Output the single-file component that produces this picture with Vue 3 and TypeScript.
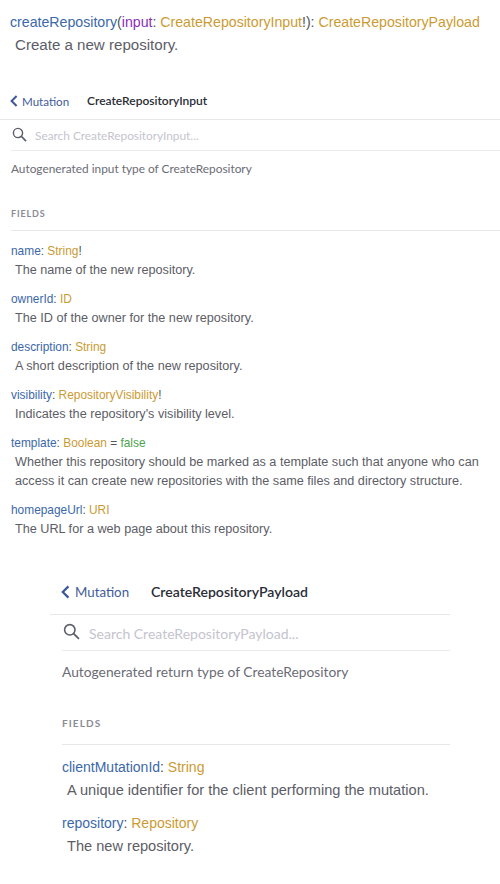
<script setup lang="ts">
interface Field {
  name: string
  type: string
  bang?: boolean
  def?: string
  desc: string
}
interface Panel {
  title: string
  search: string
  about: string
  big: boolean
  fields: Field[]
}
const panels: Panel[] = [
  {
    title: 'CreateRepositoryInput',
    search: 'Search CreateRepositoryInput...',
    about: 'Autogenerated input type of CreateRepository',
    big: false,
    fields: [
      { name: 'name', type: 'String', bang: true, desc: 'The name of the new repository.' },
      { name: 'ownerId', type: 'ID', desc: 'The ID of the owner for the new repository.' },
      { name: 'description', type: 'String', desc: 'A short description of the new repository.' },
      { name: 'visibility', type: 'RepositoryVisibility', bang: true, desc: "Indicates the repository's visibility level." },
      { name: 'template', type: 'Boolean', def: 'false', desc: 'Whether this repository should be marked as a template such that anyone who can access it can create new repositories with the same files and directory structure.' },
      { name: 'homepageUrl', type: 'URI', desc: 'The URL for a web page about this repository.' },
    ],
  },
  {
    title: 'CreateRepositoryPayload',
    search: 'Search CreateRepositoryPayload...',
    about: 'Autogenerated return type of CreateRepository',
    big: true,
    fields: [
      { name: 'clientMutationId', type: 'String', desc: 'A unique identifier for the client performing the mutation.' },
      { name: 'repository', type: 'Repository', desc: 'The new repository.' },
    ],
  },
]
</script>

<template>
  <main class="page">
    <section class="intro">
      <div class="sig"><span class="blue">createRepository</span>(<span class="purple">input</span>: <span class="gold">CreateRepositoryInput</span>!): <span class="gold">CreateRepositoryPayload</span></div>
      <p class="sig-desc">Create a new repository.</p>
    </section>

    <section v-for="p in panels" :key="p.title" class="panel" :class="{ big: p.big }">
      <header class="head">
        <span class="back">
          <svg class="chev" viewBox="0 0 8 12" aria-hidden="true"><path d="M6.6 1 1.6 6l5 5" fill="none" stroke="#3b5998" stroke-width="2" /></svg>
          <span>Mutation</span>
        </span>
        <span class="title">{{ p.title }}</span>
      </header>
      <div class="search">
        <svg class="glass" viewBox="0 0 16 16" aria-hidden="true"><circle cx="6.4" cy="6.4" r="4.9" fill="none" stroke="#5c5f6b" stroke-width="1.5" /><path d="m10 10 5 5" stroke="#5c5f6b" stroke-width="1.7" /></svg>
        <span class="placeholder">{{ p.search }}</span>
      </div>
      <p class="about">{{ p.about }}</p>
      <h3 class="fields-label">FIELDS</h3>
      <div class="fields">
        <div v-for="f in p.fields" :key="f.name" class="field">
          <div class="sigline"><span class="blue">{{ f.name }}</span>: <span class="gold">{{ f.type }}</span><template v-if="f.bang">!</template><template v-if="f.def"> = <span class="green">{{ f.def }}</span></template></div>
          <p class="fdesc">{{ f.desc }}</p>
        </div>
      </div>
    </section>
  </main>
</template>

<style scoped>
.page {
  width: 500px;
  height: 884px;
  overflow: hidden;
  background: #fff;
  font-family: "Liberation Sans", Arial, sans-serif;
  color: #5c5d66;
}
.blue { color: #3b68a8; }
.gold { color: #cb9b32; }
.purple { color: #8a2db8; }
.green { color: #4fa34f; }

.intro { padding: 12px 0 0 10px; }
.sig { font-size: 14.17px; line-height: 20px; color: #555; white-space: nowrap; }
.sig-desc { margin: 3px 0 0 5px; font-size: 15.1px; line-height: 20px; }

.panel { margin-top: 28px; }
.head {
  display: flex;
  align-items: center;
  height: 36px;
  padding-left: 10px;
  border-bottom: 1px solid #e8e8ea;
  font-family: Lato, sans-serif;
  font-size: 11.6px;
}
.back { display: flex; align-items: center; width: 77px; color: #3f5c99; }
.chev { width: 8px; height: 12px; margin-right: 4px; }
.title { font-size: 12px; font-weight: 600; color: #2a2d36; margin-top: -1px; }
.search {
  display: flex;
  align-items: center;
  height: 30px;
  margin-left: 11px;
  border-bottom: 1px solid #ececee;
  font-family: Lato, sans-serif;
  font-size: 11.85px;
}
.glass { width: 15px; height: 15px; margin: -2px 8px 0 1px; }
.placeholder { color: #c4c4ce; }
.about {
  margin: 10px 0 0 11px;
  font-family: Lato, sans-serif;
  font-size: 11.85px;
  line-height: 16px;
  color: #6b6c75;
}
.fields-label {
  margin: 31px 0 0 11px;
  padding-bottom: 10px;
  border-bottom: 1px solid #e8e8ea;
  font-family: Lato, sans-serif;
  font-size: 9px;
  line-height: 12px;
  font-weight: 700;
  letter-spacing: 0.85px;
  color: #8a8b94;
}
.fields { margin: 10px 0 0 11px; }
.field { margin-bottom: 8.7px; }
.sigline { font-size: 11.9px; line-height: 20px; color: #555; }
.fdesc { margin: 0 4px 0 4px; font-size: 12.65px; line-height: 19.3px; }

.big { margin: 30px 50px 0; }
.big .head { height: 44px; padding-left: 11px; font-size: 13.3px; }
.big .back { width: 90px; }
.big .chev { width: 9px; height: 14px; margin-right: 5px; }
.big .title { font-size: 14.05px; }
.big .search { height: 36px; padding-top: 3px; margin-left: 12px; font-size: 14px; box-sizing: border-box; }
.big .glass { width: 17px; height: 17px; margin: -4px 9px 0 1px; }
.big .about { margin: 12px 0 0 12px; font-size: 13.8px; line-height: 18px; }
.big .fields-label { margin: 36px 0 0 12px; padding-bottom: 15px; font-size: 10px; letter-spacing: 1.1px; }
.big .fields { margin: 11px 0 0 12px; }
.big .field { margin-bottom: 10px; }
.big .sigline { font-size: 14px; line-height: 23px; }
.big .fdesc { margin: 0 0 0 5px; font-size: 14.6px; line-height: 23px; }
</style>
